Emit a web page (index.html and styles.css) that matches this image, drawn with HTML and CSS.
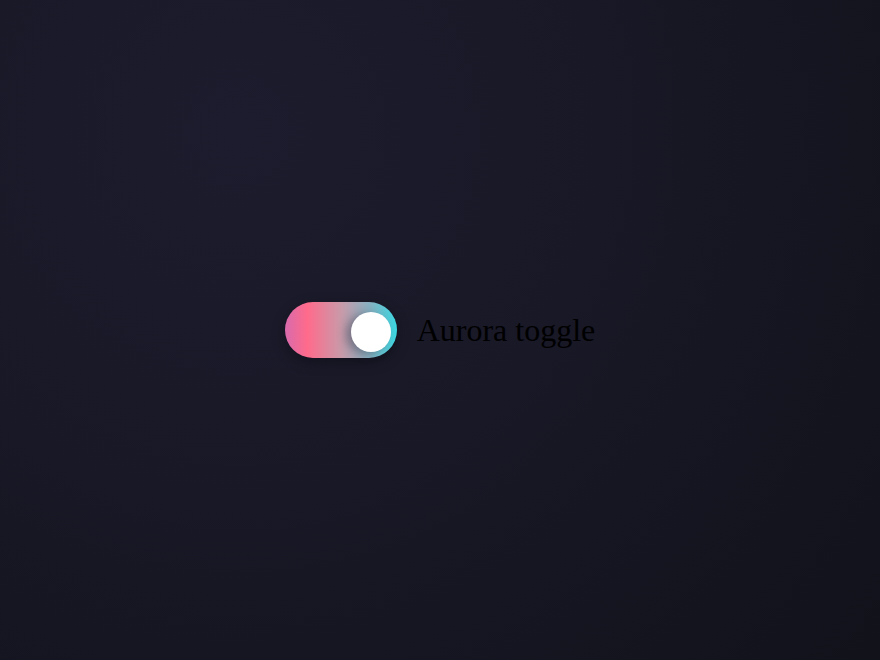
FILE: index.html
```html
<!DOCTYPE html>
<html lang="en">
<head>
    <meta charset="UTF-8">
    <meta name="viewport" content="width=device-width, initial-scale=1.0">
    <title>Aurora toggle</title>
    <link rel="stylesheet" href="styles.css">
</head>
<body>
    <label class="toggle">
        <input type="checkbox" class="toggle-input" checked>
        <span class="track"><span class="knob"></span></span>
        <span class="toggle-label">Aurora toggle</span>
    </label>
</body>
</html>
```

FILE: styles.css
```css
body {
    margin: 0;
    min-height: 100vh;
    display: flex;
    align-items: center;
    justify-content: center;
    background: radial-gradient(circle at 27% 20%, #1d1c2e 0%, #181826 45%, #12121b 100%);
    font-family: 'Liberation Serif', 'Times New Roman', serif;
}
.toggle {
    display: flex;
    align-items: center;
    gap: 20px;
    cursor: pointer;
}
.toggle-input {
    display: none;
}
.track {
    position: relative;
    width: 112px;
    height: 56px;
    border-radius: 28px;
    background: linear-gradient(90deg, #d86aac 0%, #ff6b8b 20%, #c99aa9 50%, #86b2c2 76%, #3ad8e2 100%);
    box-shadow: 0 4px 14px rgba(0, 0, 0, 0.3);
}
/* knob sits on the right while checked */
.knob {
    position: absolute;
    top: 10px;
    left: 66px;
    width: 40px;
    height: 40px;
    border-radius: 50%;
    background: #fff;
    box-shadow: -5px 2px 10px rgba(30, 40, 60, 0.4);
}
.toggle-label {
    font-size: 32px;
    color: #000;
}
```
